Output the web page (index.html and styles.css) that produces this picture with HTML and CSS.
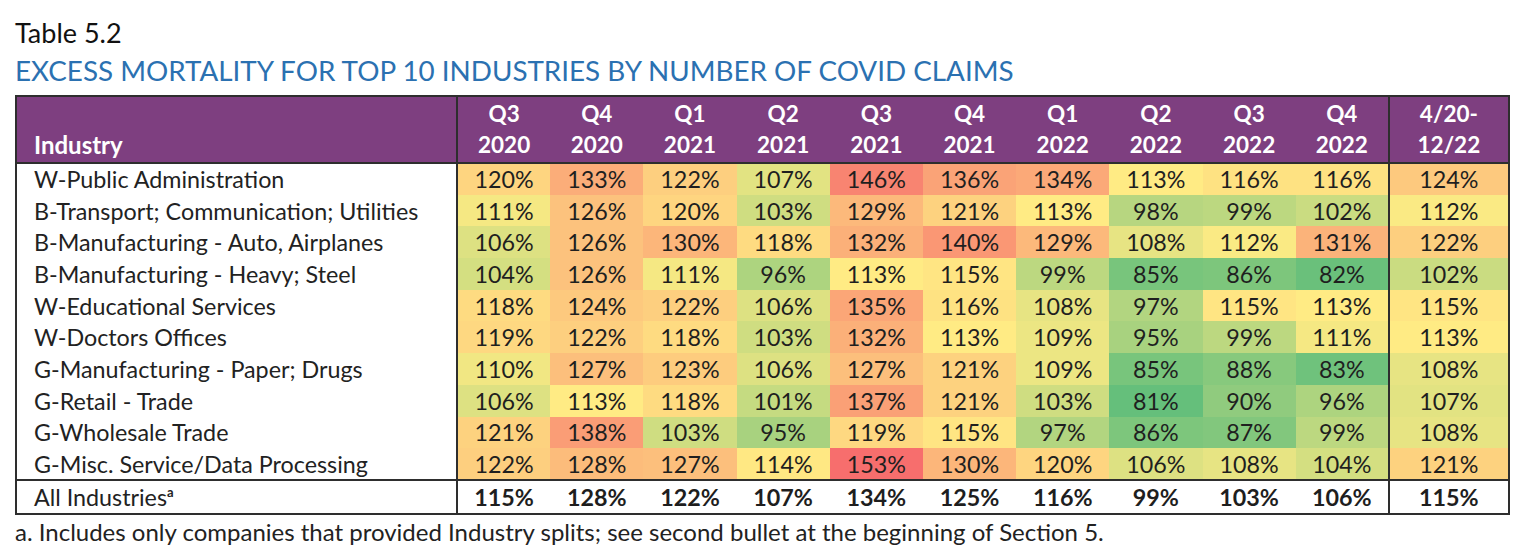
FILE: index.html
```html
<!DOCTYPE html>
<html lang="en">
<head>
<meta charset="utf-8">
<title>Table 5.2</title>
<link rel="stylesheet" href="styles.css">
</head>
<body>
<div class="page">
  <div class="title">Table 5.2</div>
  <div class="subtitle">EXCESS MORTALITY FOR TOP 10 INDUSTRIES BY NUMBER OF COVID CLAIMS</div>
  <table class="tbl">
    <colgroup>
      <col class="col-ind">
      <col class="col-q"><col class="col-q"><col class="col-q"><col class="col-q"><col class="col-q">
      <col class="col-q"><col class="col-q"><col class="col-q"><col class="col-q"><col class="col-q">
      <col class="col-all">
    </colgroup>
    <thead>
      <tr class="head">
        <th class="h-ind">Industry</th>
        <th>Q3<br>2020</th><th>Q4<br>2020</th><th>Q1<br>2021</th><th>Q2<br>2021</th><th>Q3<br>2021</th>
        <th>Q4<br>2021</th><th>Q1<br>2022</th><th>Q2<br>2022</th><th>Q3<br>2022</th><th>Q4<br>2022</th>
        <th class="h-all">4/20-<br>12/22</th>
      </tr>
    </thead>
    <tbody>
      <tr><td class="ind">W-Public Administration</td><td class="c" style="--v:120">120%</td><td class="c" style="--v:133">133%</td><td class="c" style="--v:122">122%</td><td class="c" style="--v:107">107%</td><td class="c" style="--v:146">146%</td><td class="c" style="--v:136">136%</td><td class="c" style="--v:134">134%</td><td class="c" style="--v:113">113%</td><td class="c" style="--v:116">116%</td><td class="c" style="--v:116">116%</td><td class="c all" style="--v:124">124%</td></tr>
      <tr><td class="ind">B-Transport; Communication; Utilities</td><td class="c" style="--v:111">111%</td><td class="c" style="--v:126">126%</td><td class="c" style="--v:120">120%</td><td class="c" style="--v:103">103%</td><td class="c" style="--v:129">129%</td><td class="c" style="--v:121">121%</td><td class="c" style="--v:113">113%</td><td class="c" style="--v:98">98%</td><td class="c" style="--v:99">99%</td><td class="c" style="--v:102">102%</td><td class="c all" style="--v:112">112%</td></tr>
      <tr><td class="ind">B-Manufacturing - Auto, Airplanes</td><td class="c" style="--v:106">106%</td><td class="c" style="--v:126">126%</td><td class="c" style="--v:130">130%</td><td class="c" style="--v:118">118%</td><td class="c" style="--v:132">132%</td><td class="c" style="--v:140">140%</td><td class="c" style="--v:129">129%</td><td class="c" style="--v:108">108%</td><td class="c" style="--v:112">112%</td><td class="c" style="--v:131">131%</td><td class="c all" style="--v:122">122%</td></tr>
      <tr><td class="ind">B-Manufacturing - Heavy; Steel</td><td class="c" style="--v:104">104%</td><td class="c" style="--v:126">126%</td><td class="c" style="--v:111">111%</td><td class="c" style="--v:96">96%</td><td class="c" style="--v:113">113%</td><td class="c" style="--v:115">115%</td><td class="c" style="--v:99">99%</td><td class="c" style="--v:85">85%</td><td class="c" style="--v:86">86%</td><td class="c" style="--v:82">82%</td><td class="c all" style="--v:102">102%</td></tr>
      <tr><td class="ind">W-Educational Services</td><td class="c" style="--v:118">118%</td><td class="c" style="--v:124">124%</td><td class="c" style="--v:122">122%</td><td class="c" style="--v:106">106%</td><td class="c" style="--v:135">135%</td><td class="c" style="--v:116">116%</td><td class="c" style="--v:108">108%</td><td class="c" style="--v:97">97%</td><td class="c" style="--v:115">115%</td><td class="c" style="--v:113">113%</td><td class="c all" style="--v:115">115%</td></tr>
      <tr><td class="ind">W-Doctors Offices</td><td class="c" style="--v:119">119%</td><td class="c" style="--v:122">122%</td><td class="c" style="--v:118">118%</td><td class="c" style="--v:103">103%</td><td class="c" style="--v:132">132%</td><td class="c" style="--v:113">113%</td><td class="c" style="--v:109">109%</td><td class="c" style="--v:95">95%</td><td class="c" style="--v:99">99%</td><td class="c" style="--v:111">111%</td><td class="c all" style="--v:113">113%</td></tr>
      <tr><td class="ind">G-Manufacturing - Paper; Drugs</td><td class="c" style="--v:110">110%</td><td class="c" style="--v:127">127%</td><td class="c" style="--v:123">123%</td><td class="c" style="--v:106">106%</td><td class="c" style="--v:127">127%</td><td class="c" style="--v:121">121%</td><td class="c" style="--v:109">109%</td><td class="c" style="--v:85">85%</td><td class="c" style="--v:88">88%</td><td class="c" style="--v:83">83%</td><td class="c all" style="--v:108">108%</td></tr>
      <tr><td class="ind">G-Retail - Trade</td><td class="c" style="--v:106">106%</td><td class="c" style="--v:113">113%</td><td class="c" style="--v:118">118%</td><td class="c" style="--v:101">101%</td><td class="c" style="--v:137">137%</td><td class="c" style="--v:121">121%</td><td class="c" style="--v:103">103%</td><td class="c" style="--v:81">81%</td><td class="c" style="--v:90">90%</td><td class="c" style="--v:96">96%</td><td class="c all" style="--v:107">107%</td></tr>
      <tr><td class="ind">G-Wholesale Trade</td><td class="c" style="--v:121">121%</td><td class="c" style="--v:138">138%</td><td class="c" style="--v:103">103%</td><td class="c" style="--v:95">95%</td><td class="c" style="--v:119">119%</td><td class="c" style="--v:115">115%</td><td class="c" style="--v:97">97%</td><td class="c" style="--v:86">86%</td><td class="c" style="--v:87">87%</td><td class="c" style="--v:99">99%</td><td class="c all" style="--v:108">108%</td></tr>
      <tr><td class="ind">G-Misc. Service/Data Processing</td><td class="c" style="--v:122">122%</td><td class="c" style="--v:128">128%</td><td class="c" style="--v:127">127%</td><td class="c" style="--v:114">114%</td><td class="c" style="--v:153">153%</td><td class="c" style="--v:130">130%</td><td class="c" style="--v:120">120%</td><td class="c" style="--v:106">106%</td><td class="c" style="--v:108">108%</td><td class="c" style="--v:104">104%</td><td class="c all" style="--v:121">121%</td></tr>
    </tbody>
    <tfoot>
      <tr class="total">
        <td class="ind">All Industries<sup class="sup">a</sup></td>
        <td>115%</td><td>128%</td><td>122%</td><td>107%</td><td>134%</td><td>125%</td><td>116%</td><td>99%</td><td>103%</td><td>106%</td><td class="all">115%</td>
      </tr>
    </tfoot>
  </table>
  <div class="note">a. Includes only companies that provided Industry splits; see second bullet at the beginning of Section 5.</div>
</div>
</body>
</html>
```

FILE: styles.css
```css
* { box-sizing: border-box; }

html, body {
  margin: 0;
  padding: 0;
  background: #ffffff;
}

body {
  font-family: "Lato", "Open Sans", sans-serif;
  color: #1e1e1e;
}

.page {
  padding: 18px 0 0 15px;
  width: 1520px;
}

.title {
  font-size: 27px;
  line-height: 30px;
  color: #111;
}

.subtitle {
  font-size: 27.8px;
  line-height: 32px;
  margin-top: 7px;
  color: #2b71b1;
}

.tbl {
  margin-top: 8px;
  width: 1493px;
  table-layout: fixed;
  border-collapse: collapse;
  border: 2px solid #2e2e2e;
  font-size: 23.3px;
}

.col-ind { width: 441px; }
.col-q { width: 93.2px; }
.col-all { width: 120px; }

.head th {
  background: #7e3f80;
  color: #ffffff;
  font-size: 22.5px;
  font-weight: 700;
  height: 66px;
  line-height: 31px;
  padding: 1px 0 2px;
  text-align: center;
  vertical-align: bottom;
  border-bottom: 2px solid #2e2e2e;
}

.head th.h-ind {
  text-align: left;
  padding-left: 17px;
  font-size: 24px;
  border-right: 2px solid #2e2e2e;
}

.head th.h-all {
  border-left: 2px solid #2e2e2e;
}

tbody td {
  height: 31.7px;
  padding: 0;
  line-height: 30px;
  text-align: center;
}

td.ind {
  text-align: left;
  padding-left: 17px;
  border-right: 2px solid #2e2e2e;
  color: #222;
}

td.all {
  border-left: 2px solid #2e2e2e;
}

/* Three-colour scale: 81% green, 113% (median) yellow, 153% red */
.c {
  --t1: clamp(0, (var(--v) - 81) / 32, 1);
  --t2: clamp(0, (var(--v) - 113) / 40, 1);
  background: rgb(
    calc(101 + 154 * var(--t1) - 8 * var(--t2)),
    calc(191 + 44 * var(--t1) - 125 * var(--t2)),
    calc(123 + 9 * var(--t1) - 23 * var(--t2))
  );
  color: #1f1f1f;
}

.total td {
  height: 34px;
  padding: 0;
  line-height: 32px;
  text-align: center;
  font-weight: 700;
  border-top: 2px solid #2e2e2e;
}

.total td.ind {
  font-weight: 400;
  text-align: left;
  padding-left: 17px;
}

.sup {
  font-size: 13px;
  font-weight: 700;
  line-height: 0;
  vertical-align: 9px;
}

.note {
  font-size: 24px;
  line-height: 30px;
  margin-top: 2px;
  color: #222;
}
```
